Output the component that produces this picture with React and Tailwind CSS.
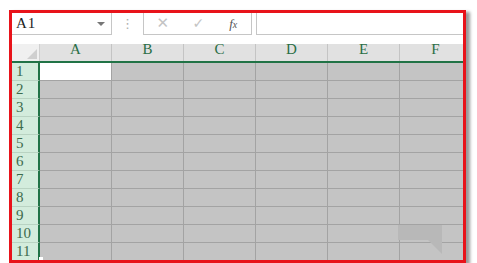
import React from 'react';

const columnas = ['A', 'B', 'C', 'D', 'E', 'F'];
const filas = [1, 2, 3, 4, 5, 6, 7, 8, 9, 10, 11];

export default function App() {
  return (
    <div className="w-[477px] h-[263px] bg-white overflow-hidden pl-[9px] pt-[10px]">
      {/* marco rojo con sombra */}
      <div className="relative w-[457px] h-[253px] border-[3px] border-[#e8131a] bg-white overflow-hidden shadow-[4px_2px_3px_#9a9a9a] font-[family-name:'Liberation_Serif',serif]">

        {/* BARRA DE FÓRMULAS */}
        <div className="flex h-[22px] items-stretch">
          <div className="w-[100px] flex items-center justify-between border-b border-r border-[#c6c6c6] pl-[4px] pr-[6px]">
            <span className="text-[15px] text-[#222] tracking-[1px]">A1</span>
            <span className="w-0 h-0 border-l-[4px] border-r-[4px] border-t-[4px] border-l-transparent border-r-transparent border-t-[#777]"></span>
          </div>
          <div className="w-[31px] flex items-center justify-center text-[13px] text-[#b0b0b0] font-[family-name:'DejaVu_Sans',sans-serif]">⋮</div>
          <div className="w-[109px] flex items-center border border-t-0 border-[#c6c6c6] text-[#c4c4c4]">
            <span className="w-[38px] text-center text-[15px] font-[family-name:'DejaVu_Sans',sans-serif]">✕</span>
            <span className="w-[34px] text-center text-[14px] font-[family-name:'DejaVu_Sans',sans-serif]">✓</span>
            <span className="w-[36px] text-center text-[13px] italic text-[#555]">f<span className="text-[10px]">x</span></span>
          </div>
          <div className="w-[4px]"></div>
          <div className="flex-1 border-l border-b border-[#c6c6c6]"></div>
        </div>

        <div className="h-[9px] bg-white"></div>

        {/* ENCABEZADO DE COLUMNAS */}
        <div className="flex h-[19px] border-b-2 border-[#217346]">
          <div className="w-[28px] shrink-0 bg-[#f0f0f0] border-r border-[#d0d0d0] flex items-end justify-end p-[2px]">
            <span className="w-0 h-0 border-l-[10px] border-l-transparent border-b-[10px] border-b-[#cfcfcf]"></span>
          </div>
          {columnas.map((c) => (
            <div key={c} className="w-[72px] shrink-0 bg-[#e1e1e1] border-r border-[#c4c4c4] flex items-end justify-center pb-[1px] text-[15px] text-[#2a6e45]">
              {c}
            </div>
          ))}
        </div>

        {/* FILAS */}
        {filas.map((f) => (
          <div key={f} className="flex h-[18px]">
            <div className="w-[28px] shrink-0 bg-[#d3ecdc] border-r-2 border-[#217346] border-b border-b-[#b9d3c2] flex items-center pl-[4px] text-[15px] text-[#3d6b4d]">
              {f}
            </div>
            {columnas.map((c) => (
              <div
                key={c}
                className={`w-[72px] shrink-0 border-r border-b border-[#a3a3a3] ${
                  f === 1 && c === 'A' ? 'bg-white' : 'bg-[#c4c4c4]'
                }`}
              ></div>
            ))}
          </div>
        ))}

        {/* controlador de relleno */}
        <div className="absolute left-[27px] top-[244px] w-[4px] h-[4px] bg-white"></div>

        {/* restos de un globo de ayuda sobre la hoja */}
        <div className="absolute left-[386px] top-[212px] w-[44px] h-[15px] bg-[#b8b8b8]"></div>
        <div className="absolute left-[416px] top-[227px] w-[14px] h-[14px] bg-[#b8b8b8] [clip-path:polygon(0_0,100%_0,100%_100%)]"></div>
      </div>
    </div>
  );
}
